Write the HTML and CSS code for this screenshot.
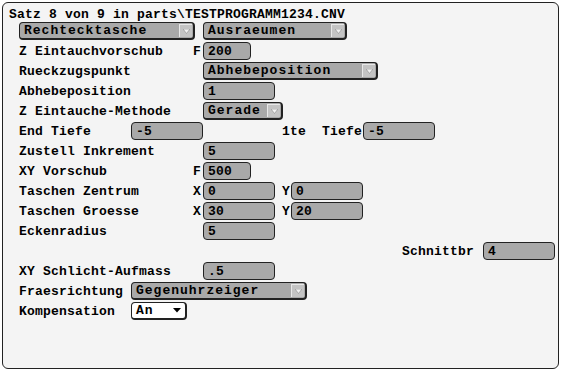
FILE: index.html
```html
<!DOCTYPE html>
<html lang="de">
<head>
  <meta charset="UTF-8">
  <title>Satz 8 von 9</title>
  <link rel="stylesheet" href="styles.css">
</head>
<body>
  <div class="frame">
    <div class="title">Satz 8 von 9 in parts\TESTPROGRAMM1234.CNV</div>
    <div class="rows">
      <div class="row">
        <div class="dd w176">Rechtecktasche<span class="arrow"><svg width="7" height="5" viewBox="0 0 7 5"><polygon points="0,0 7,0 3.5,4.5" fill="#f2f2f2" stroke="#8a8a8a" stroke-width="0.6"/></svg></span></div>
        <div class="dd w144 gap8">Ausraeumen<span class="arrow"><svg width="7" height="5" viewBox="0 0 7 5"><polygon points="0,0 7,0 3.5,4.5" fill="#f2f2f2" stroke="#8a8a8a" stroke-width="0.6"/></svg></span></div>
      </div>
      <div class="row">
        <span class="lbl">Z Eintauchvorschub</span><span class="pre">F</span>
        <div class="field w48">200</div>
      </div>
      <div class="row">
        <span class="lbl">Rueckzugspunkt</span><span class="pre"></span>
        <div class="dd w175">Abhebeposition<span class="arrow"><svg width="7" height="5" viewBox="0 0 7 5"><polygon points="0,0 7,0 3.5,4.5" fill="#f2f2f2" stroke="#8a8a8a" stroke-width="0.6"/></svg></span></div>
      </div>
      <div class="row">
        <span class="lbl">Abhebeposition</span><span class="pre"></span>
        <div class="field w72">1</div>
      </div>
      <div class="row">
        <span class="lbl">Z Eintauche-Methode</span><span class="pre"></span>
        <div class="dd w80">Gerade<span class="arrow"><svg width="7" height="5" viewBox="0 0 7 5"><polygon points="0,0 7,0 3.5,4.5" fill="#f2f2f2" stroke="#8a8a8a" stroke-width="0.6"/></svg></span></div>
      </div>
      <div class="row">
        <span class="lbl short">End Tiefe</span>
        <div class="field w72">-5</div>
        <span class="mid">1te  Tiefe</span>
        <div class="field w72">-5</div>
      </div>
      <div class="row">
        <span class="lbl">Zustell Inkrement</span><span class="pre"></span>
        <div class="field w72">5</div>
      </div>
      <div class="row">
        <span class="lbl">XY Vorschub</span><span class="pre">F</span>
        <div class="field w48">500</div>
      </div>
      <div class="row">
        <span class="lbl">Taschen Zentrum</span><span class="pre">X</span>
        <div class="field w72">0</div>
        <span class="pre ypre">Y</span>
        <div class="field w72">0</div>
      </div>
      <div class="row">
        <span class="lbl">Taschen Groesse</span><span class="pre">X</span>
        <div class="field w72">30</div>
        <span class="pre ypre">Y</span>
        <div class="field w72">20</div>
      </div>
      <div class="row">
        <span class="lbl">Eckenradius</span><span class="pre"></span>
        <div class="field w72">5</div>
      </div>
      <div class="row right">
        <span class="lbl-r">Schnittbr</span>
        <div class="field w72">4</div>
      </div>
      <div class="row">
        <span class="lbl">XY Schlicht-Aufmass</span><span class="pre"></span>
        <div class="field w72">.5</div>
      </div>
      <div class="row">
        <span class="lbl short">Fraesrichtung</span>
        <div class="dd w176">Gegenuhrzeiger<span class="arrow"><svg width="7" height="5" viewBox="0 0 7 5"><polygon points="0,0 7,0 3.5,4.5" fill="#f2f2f2" stroke="#8a8a8a" stroke-width="0.6"/></svg></span></div>
      </div>
      <div class="row">
        <span class="lbl short">Kompensation</span>
        <div class="dd plain w56">An<span class="arrow"><svg width="8" height="5" viewBox="0 0 8 5"><polygon points="0,0 8,0 4,4.5" fill="#000"/></svg></span></div>
      </div>
    </div>
  </div>
</body>
</html>
```

FILE: styles.css
```css
body {
  margin: 0;
  background: #fff;
  font-family: "Liberation Mono", "DejaVu Sans Mono", monospace;
  font-weight: bold;
  font-size: 13px;
  letter-spacing: 0.2px;
  color: #000;
}
.frame {
  margin: 2px;
  height: 367px;
  box-sizing: border-box;
  border: 1px solid #222;
  border-radius: 6px;
  background: #f4f4f4;
  padding-right: 3px;
}
.title {
  padding: 5px 0 0 6px;
  height: 13px;
  line-height: 13px;
  white-space: pre;
}
.rows {
  padding-left: 16px;
}
.row {
  display: flex;
  align-items: center;
  height: 20px;
}
.row.right {
  justify-content: flex-end;
}
.lbl {
  width: 174px;
  padding-top: 1px;
  white-space: pre;
}
.lbl.short {
  width: 112px;
}
.lbl-r {
  margin-right: 9px;
  padding-top: 1px;
}
.pre {
  width: 10px;
  padding-top: 1px;
}
.ypre {
  width: 9px;
  margin-left: 7px;
}
.mid {
  width: 81px;
  margin-left: 79px;
  padding-top: 1px;
  white-space: pre;
}
.field {
  box-sizing: border-box;
  height: 18px;
  line-height: 16px;
  padding: 1px 0 0 4px;
  border: 1px solid #222;
  border-radius: 4px;
  background: #a9a9a9;
}
.dd {
  box-sizing: border-box;
  display: flex;
  align-items: center;
  justify-content: space-between;
  height: 18px;
  padding-left: 4px;
  border: 1px solid #222;
  border-right-width: 2px;
  border-bottom-width: 2px;
  border-radius: 4px;
  background: #a9a9a9;
  letter-spacing: 1px;
  line-height: 14px;
}
.dd .arrow {
  display: flex;
  align-items: center;
  justify-content: center;
  width: 13px;
  height: 13px;
  margin-right: 1px;
  background: #c4c4c4;
  border-top: 1px solid #e8e8e8;
  border-left: 1px solid #e8e8e8;
  box-sizing: border-box;
}
.dd.plain {
  background: #fff;
}
.dd.plain .arrow {
  background: none;
  border: none;
  margin-right: 2px;
}
.gap8 {
  margin-left: 8px;
}
.w48 { width: 48px; }
.w56 { width: 56px; }
.w72 { width: 72px; }
.w80 { width: 80px; }
.w144 { width: 144px; }
.w175 { width: 175px; }
.w176 { width: 176px; }
```
